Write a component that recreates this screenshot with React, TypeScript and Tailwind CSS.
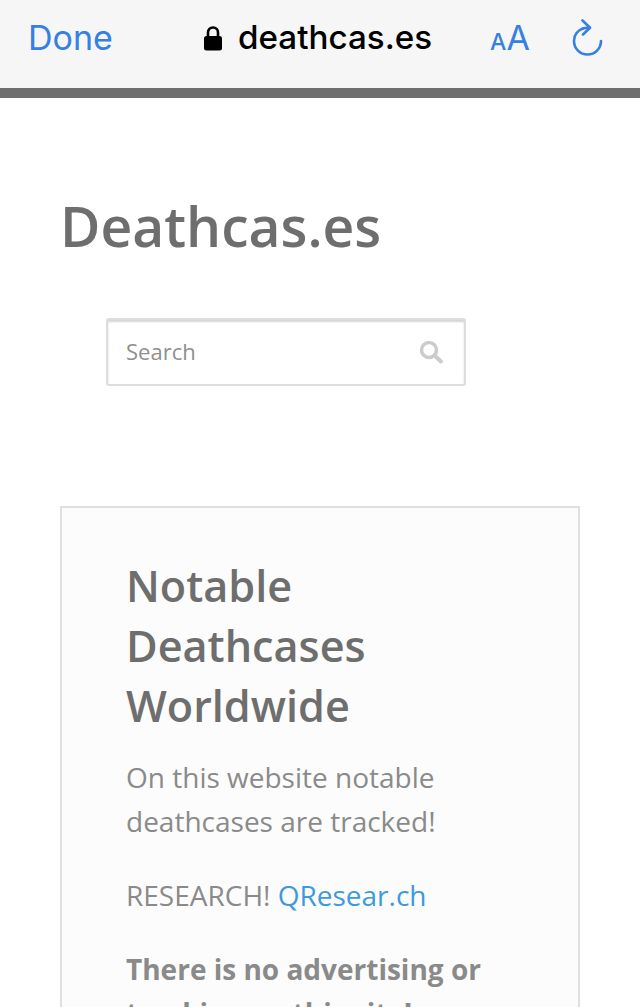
import React from "react";

function Lock() {
  return (
    <svg width="18" height="26" viewBox="0 0 18 26" fill="none">
      <path d="M4 12V7.5C4 4.5 6 2.5 9 2.5S14 4.5 14 7.5V12" stroke="#000" strokeWidth="2.6" />
      <rect x="0" y="11" width="18" height="14.5" rx="2.5" fill="#000" />
    </svg>
  );
}

function Reload() {
  return (
    <svg width="32" height="38" viewBox="0 0 32 38" fill="none" stroke="#3580e4" strokeWidth="2.6" strokeLinecap="round" strokeLinejoin="round">
      <path d="M11 9.5C5.5 11.5 2 16 2 22C2 29.5 8 35.5 15.500 35.500C23 35.500 29 29.500 29 22" />
      <path d="M11 9.500C12.500 9 14 8.800 16 8.800" />
      <path d="M10.500 1.500L18 8.800L11 15.500" />
    </svg>
  );
}

function SearchIcon() {
  return (
    <svg width="24" height="24" viewBox="0 0 24 24" fill="none" stroke="#cccccc">
      <circle cx="10" cy="10" r="7.5" strokeWidth="3.5" />
      <path d="M15.500 15.500L22 21.500" strokeWidth="4" strokeLinecap="round" />
    </svg>
  );
}

function App() {
  return (
    <div className="h-[1007px] w-[640px] overflow-hidden bg-white font-['Open_Sans',sans-serif]">
      <div className="flex h-[88px] items-center bg-[#f6f6f6] pb-[12px] font-['Inter',sans-serif]">
        <span className="ml-[28px] w-[176px] text-[34px] leading-none text-[#3580e4]">Done</span>
        <Lock />
        <span className="ml-[16px] text-[33.200px] leading-none font-medium text-black">deathcas.es</span>
        <span className="ml-[58px] flex items-baseline leading-none text-[#3580e4]">
          <span className="text-[23px] font-medium">A</span>
          <span className="text-[34px]">A</span>
        </span>
        <span className="ml-[42px]">
          <Reload />
        </span>
      </div>
      <div className="h-[10px] bg-[#6e6e6e]" />

      <div className="pt-[94px] pl-[60px]">
        <h1 className="text-[55.200px] leading-[68px] font-semibold text-[#6e6e6e]">Deathcas.es</h1>

        <div className="mt-[58px] ml-[46px] flex h-[68px] w-[360px] items-center justify-between rounded-[3px] border-2 border-[#dddddd] pr-[21px] pb-[1px] pl-[18px] shadow-[inset_0_2px_2px_#d4d4d4]">
          <span className="text-[22px] text-[#8f8f8f]">Search</span>
          <SearchIcon />
        </div>

        <div className="mt-[120px] w-[520px] border-2 border-[#e0e0e0] bg-[#fcfcfc] pt-[48px] pr-[40px] pl-[64px]">
          <h2 className="text-[43.200px] leading-[60px] font-semibold text-[#6e6e6e]">
            Notable Deathcases Worldwide
          </h2>
          <p className="mt-[19px] text-[28px] leading-[44px] text-[#8a8a8a]">
            On this website notable deathcases are tracked!
          </p>
          <p className="mt-[30px] text-[28px] leading-[44px] text-[#8a8a8a]">
            RESEARCH! <span className="text-[#3d9ade]">QResear.ch</span>
          </p>
          <p className="mt-[30px] text-[28px] leading-[44px] font-bold text-[#8a8a8a]">
            There is no advertising or tracking on this site!
          </p>
        </div>
      </div>
    </div>
  );
}

export default App;
